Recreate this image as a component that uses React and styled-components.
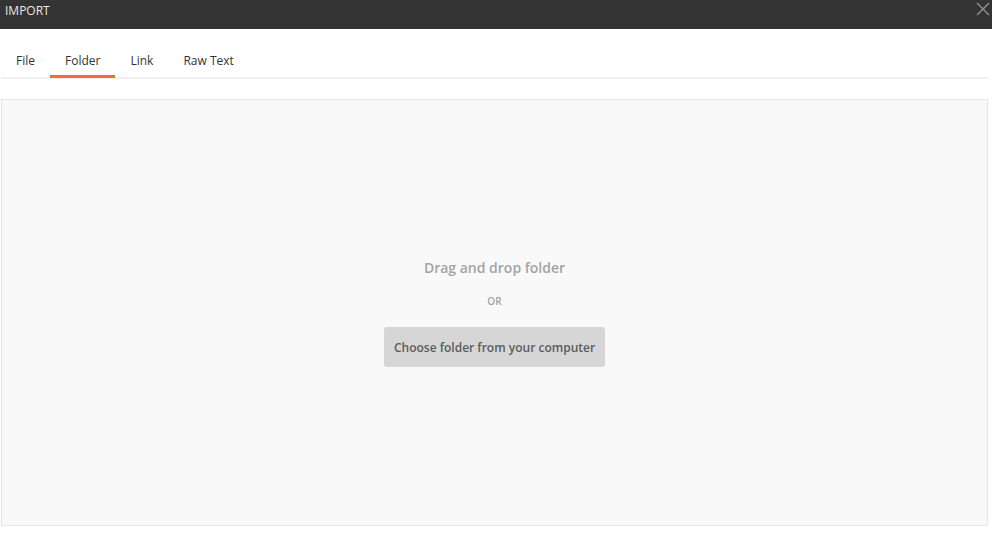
import React, { useState } from "react";
import styled, { createGlobalStyle } from "styled-components";

const GlobalStyle = createGlobalStyle`
  html, body {
    margin: 0;
    padding: 0;
    background: #ffffff;
    font-family: "Open Sans", "Liberation Sans", sans-serif;
  }
  * { box-sizing: border-box; }
`;

const Modal = styled.div`
  width: 992px;
  height: 559px;
  display: flex;
  flex-direction: column;
  background: #fff;
`;

const Header = styled.div`
  height: 29px;
  background: #333333;
  display: flex;
  align-items: center;
  justify-content: space-between;
  padding: 0 2px 0 5px;

  .title {
    color: #e8e8e8;
    font-size: 12px;
    margin-top: -9px;
  }
`;

const CloseButton = styled.button`
  border: 0;
  background: none;
  padding: 0;
  margin-top: -12px;
  width: 14px;
  height: 14px;
  display: flex;
  cursor: pointer;
`;

const Body = styled.div`
  flex: 1;
  display: flex;
  flex-direction: column;
  padding: 0 4px 0 1px;
`;

const TabBar = styled.div`
  display: flex;
  margin-top: 16px;
  border-bottom: 2px solid #f0f0f0;
`;

const Tab = styled.div`
  padding: 7px 15px 6px;
  font-size: 12px;
  color: #333;
  border-bottom: 3px solid ${(p) => (p.$active ? "#f26b3a" : "transparent")};
  margin-bottom: -1px;
  cursor: pointer;
`;

const DropZone = styled.div`
  margin-top: 20px;
  height: 427px;
  background: #f9f9f9;
  border: 1px solid #e6e6e6;
  display: flex;
  flex-direction: column;
  align-items: center;
  justify-content: center;
`;

const DropTitle = styled.div`
  font-size: 14px;
  font-weight: 600;
  color: #a3a3a3;
`;

const Or = styled.div`
  font-size: 10px;
  font-weight: 600;
  color: #a3a3a3;
  margin-top: 17px;
`;

const ChooseButton = styled.button`
  margin-top: 19px;
  width: 221px;
  height: 40px;
  background: #d6d6d6;
  border: 0;
  border-radius: 3px;
  font-family: inherit;
  font-size: 12px;
  font-weight: 600;
  color: #5c5c5c;
  cursor: pointer;
`;

const tabs = ["File", "Folder", "Link", "Raw Text"];

export default function App() {
  const [active, setActive] = useState("Folder");
  return (
    <>
      <GlobalStyle />
      <Modal>
        <Header>
          <span className="title">IMPORT</span>
          <CloseButton aria-label="Close">
            <svg width="14" height="14" viewBox="0 0 14 14">
              <path d="M1 1 L13 13 M13 1 L1 13" stroke="#8a8a8a" strokeWidth="1.6" />
            </svg>
          </CloseButton>
        </Header>
        <Body>
          <TabBar>
            {tabs.map((t) => (
              <Tab key={t} $active={t === active} onClick={() => setActive(t)}>
                {t}
              </Tab>
            ))}
          </TabBar>
          <DropZone>
            <DropTitle>Drag and drop folder</DropTitle>
            <Or>OR</Or>
            <ChooseButton>Choose folder from your computer</ChooseButton>
          </DropZone>
        </Body>
      </Modal>
    </>
  );
}
